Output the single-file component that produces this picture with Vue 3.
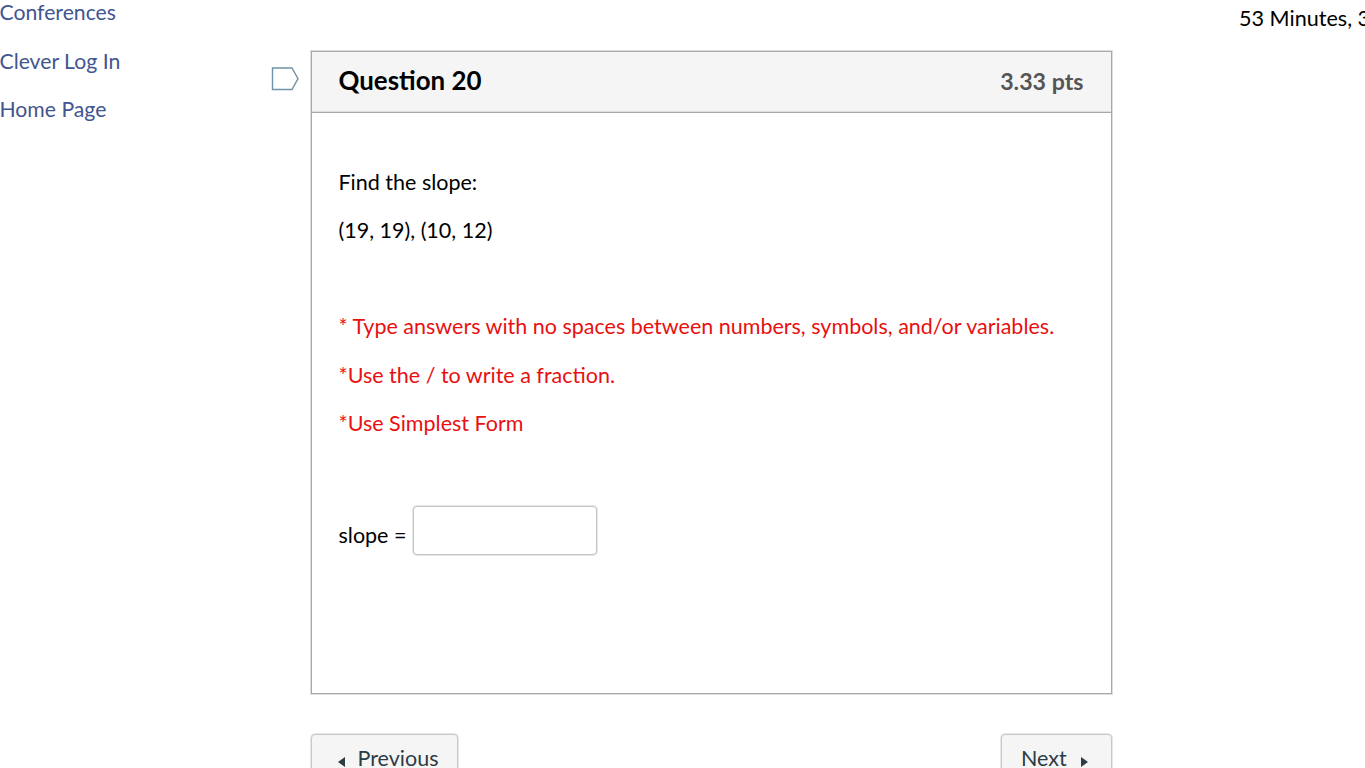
<script setup>
const links = ['Conferences', 'Clever Log In', 'Home Page']
const notes = ['* Type answers with no spaces between numbers, symbols, and/or variables.', '*Use the / to write a fraction.', '*Use Simplest Form']
</script>

<template>
  <div class="page">
    <nav class="side">
      <a v-for="l in links" :key="l" class="link">{{ l }}</a>
    </nav>
    <main class="main">
      <div class="rule"></div>
      <div class="question-row">
        <svg class="flag" width="28" height="24" viewBox="0 0 28 24">
          <path d="M1.5 1H21L27 11.7L21 22.5H1.5Z" fill="#fff" stroke="#7193a8" stroke-width="1.4" />
        </svg>
        <section class="card">
          <header class="head">
            <h2 class="title">Question 20</h2>
            <span class="pts">3.33 pts</span>
          </header>
          <div class="body">
            <p class="line">Find the slope:</p>
            <p class="line">(19, 19), (10, 12)</p>
            <div class="notes">
              <p v-for="n in notes" :key="n" class="line red">{{ n }}</p>
            </div>
            <div class="answer">
              <span class="label">slope =</span>
              <input class="box" type="text" aria-label="slope" />
            </div>
          </div>
        </section>
      </div>
      <div class="pager">
        <button class="btn prev"><span class="tri left"></span>Previous</button>
        <button class="btn next"><span>Next</span><span class="tri right"></span></button>
      </div>
    </main>
    <aside class="timer">53 Minutes, 3</aside>
  </div>
</template>

<style scoped>
.page {
  display: flex;
  width: 1365px;
  height: 768px;
  overflow: hidden;
  background: #fff;
  font-family: Lato, "Open Sans", sans-serif;
  font-size: 21.5px;
  color: #000;
}
.side {
  width: 249px;
  flex: none;
  display: flex;
  flex-direction: column;
  gap: 22.4px;
  margin-top: -0.6px;
  margin-left: -0.5px;
}
.link {
  color: #42558f;
  line-height: 26px;
  font-size: 21.2px;
}
.main {
  width: 926.5px;
  flex: none;
  display: flex;
  flex-direction: column;
}
.rule {
  margin-top: 11px;
  height: 1px;
  background: #a8a8a8;
}
.question-row {
  display: flex;
  margin-top: 40px;
  padding-left: 22px;
}
.flag {
  margin: 16px 12px 0 0;
  flex: none;
}
.card {
  box-sizing: border-box;
  width: 801px;
  height: 643px;
  border: 1px solid #a8a8a8;
  box-shadow: 0 0 0 1px #dedede;
  flex: none;
}
.head {
  box-sizing: border-box;
  height: 61px;
  background: #f5f5f5;
  border-bottom: 1px solid #a8a8a8;
  box-shadow: inset 0 -1px 0 #dedede;
  display: flex;
  align-items: center;
  justify-content: space-between;
  padding: 0 27px 5px 27px;
}
.title {
  margin: 0;
  font-size: 25.9px;
  font-weight: 700;
}
.pts {
  font-size: 23.2px;
  font-weight: 700;
  color: #555;
  padding-top: 2px;
}
.body {
  padding: 56px 28px 0 27px;
}
.line {
  margin: 0 0 22px;
  line-height: 26.4px;
}
.notes {
  margin-top: 69.4px;
}
.red {
  color: #e81010;
}
.answer {
  display: flex;
  align-items: center;
  gap: 7px;
  margin-top: 69.6px;
}
.label {
  padding-top: 9px;
}
.box {
  box-sizing: border-box;
  width: 184px;
  height: 49px;
  border: 1px solid #c4c4c4;
  box-shadow: 0 0 0 1px #e6e6e6;
  border-radius: 4px;
  background: #fff;
  padding: 0;
}
.pager {
  display: flex;
  justify-content: space-between;
  margin: 40px 63px 0 62px;
}
.btn {
  box-sizing: border-box;
  height: 60px;
  padding-top: 10px;
  display: flex;
  align-items: flex-start;
  background: #f5f5f5;
  border: 1px solid #c8c8c8;
  box-shadow: 0 0 0 1px #e8e8e8;
  border-radius: 4px;
  font-family: inherit;
  font-size: 21.5px;
  line-height: 26px;
  color: #2d3b45;
}
.prev {
  width: 147px;
  padding-left: 26px;
  padding-right: 0;
}
.next {
  width: 111px;
  padding-left: 19px;
  padding-right: 0;
}
.tri {
  width: 0;
  height: 0;
  margin-top: 12px;
  border-top: 5px solid transparent;
  border-bottom: 5px solid transparent;
}
.tri.left {
  border-right: 7px solid #2d3b45;
  margin-right: 13px;
}
.tri.right {
  border-left: 7px solid #2d3b45;
  margin-left: 14px;
}
.timer {
  margin: 5px 0 0 64px;
  line-height: 26px;
  white-space: nowrap;
  font-size: 21.6px;
}
</style>
